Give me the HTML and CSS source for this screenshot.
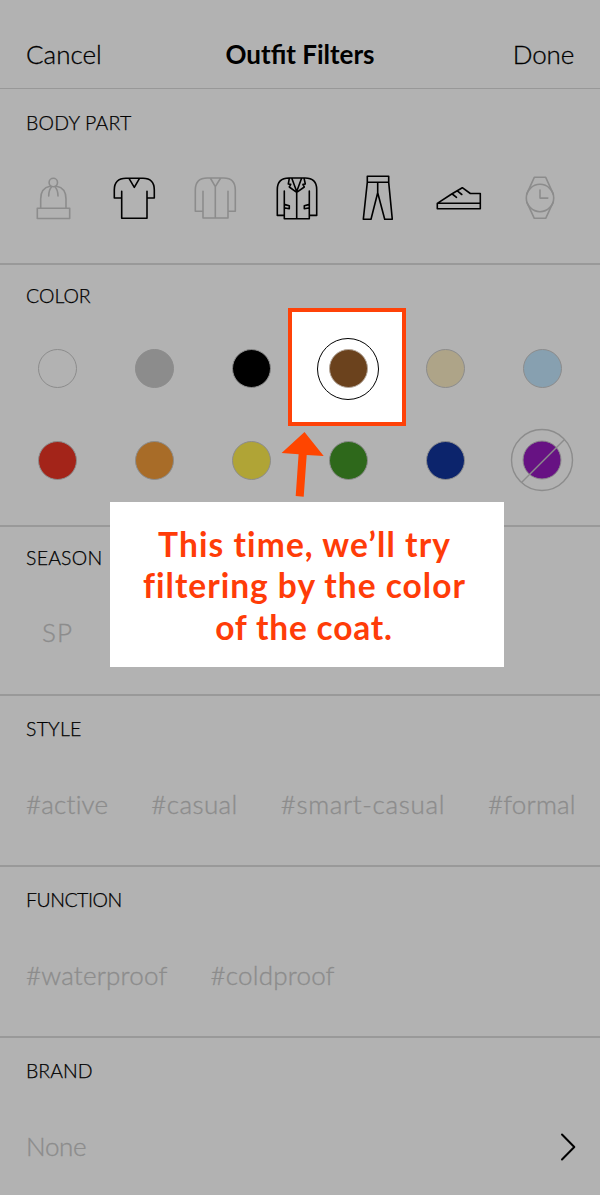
FILE: index.html
```html
<!DOCTYPE html>
<html lang="en">
<head>
<meta charset="utf-8">
<title>Outfit Filters</title>
<link rel="stylesheet" href="styles.css">
</head>
<body>
<main class="screen">
  <header class="navbar">
    <span class="nav-action cancel">Cancel</span>
    <h1 class="nav-title">Outfit Filters</h1>
    <span class="nav-action done">Done</span>
  </header>

  <section class="section body-part">
    <h2 class="heading h-body">BODY PART</h2>
    <div class="icons">
      <svg class="icon muted" viewBox="13 168 81 60"><circle cx="53.3" cy="182.5" r="4.2"/><path d="M40.7 208.3V199Q40.7 188 50 186.3M66 208.3V199Q66 188 56.6 186.3M51.6 186.7Q48.7 190 48.7 196M55 186.7Q58 190 58 196M37.3 208.3H69.7V218.5H37.3Z"/></svg>
      <svg class="icon" viewBox="94 168 81 60"><path d="M121.7 191.3V218.3H147V191.3M121.7 198H114.3V190Q114.3 178.3 126 178.3H143Q154.3 178.3 154.3 190V198H147M129 178.3L134.3 187.3L139.5 178.3"/></svg>
      <svg class="icon muted" viewBox="175 168 81 60"><path d="M203 191.3V218H228V191.3M203 211.3H195.3V190Q195.3 178 207.3 178H223.7Q235.3 178 235.3 190V211.3H228M210.3 178L215.3 186.7L220.7 178M215.3 186.7V218"/></svg>
      <svg class="icon" viewBox="256 168 81 60"><path d="M284.3 191V218.7H309.3V191M284.3 215.4H277.3V189.5Q277.3 178 289 178H305Q316.7 178 316.7 189.5V215.4H309.3M296.7 192V218.7M289.3 178.3L288.3 184L290.7 184.4L289.3 187L296.7 192.3L304.3 187L302.9 184.4L305.3 184L304.1 178.3M291.8 178.3L296.7 191.5L301.6 178.3M285 204.6L289.3 205.7V208.8L285 208M308.6 204.6L304.3 205.7V208.8L308.6 208"/></svg>
      <svg class="icon" viewBox="337 168 81 60"><path d="M367.3 176.3H388.7V182.3H367.3ZM367.3 182.3L363.3 219.3H371L377.7 192.7L384.7 219.3H392.3L388.7 182.3M377.7 182.3V192.7"/></svg>
      <svg class="icon" viewBox="418 168 81 60"><path d="M437.3 203.3L451.7 194L462.3 187.7L470.3 193.5H480.3V208.7H437.3ZM437.3 203.3H480.3M452.3 194L456.5 197.3M457.6 191.2L461.8 194.5"/></svg>
      <svg class="icon muted" viewBox="499 168 81 60"><circle cx="540" cy="198" r="13.7"/><path d="M526.7 194L534.3 177.3H545.7L553.3 194M526.7 202L534.3 218.3H545.7L553.3 202M540 190V198.1H547.8"/></svg>
    </div>
  </section>

  <section class="section color">
    <h2 class="heading h-color">COLOR</h2>
    <div class="swatches">
      <span class="cell"><i class="dot white"></i></span>
      <span class="cell"><i class="dot gray"></i></span>
      <span class="cell"><i class="dot black"></i></span>
      <span class="cell"></span>
      <span class="cell"><i class="dot beige"></i></span>
      <span class="cell"><i class="dot sky"></i></span>
      <span class="cell"><i class="dot red"></i></span>
      <span class="cell"><i class="dot orange"></i></span>
      <span class="cell"><i class="dot yellow"></i></span>
      <span class="cell"><i class="dot green"></i></span>
      <span class="cell"><i class="dot navy"></i></span>
      <span class="cell"><svg class="excluded" viewBox="0 0 64 64"><circle class="fill" cx="32" cy="32" r="19"/><circle cx="32" cy="32" r="30.5"/><path d="M11.5 54.5L54.5 11.5"/></svg></span>
    </div>
  </section>

  <section class="section season">
    <h2 class="heading h-season">SEASON</h2>
    <div class="tags"><span class="sp">SP</span></div>
  </section>

  <section class="section style">
    <h2 class="heading h-style">STYLE</h2>
    <div class="tags"><span class="t-active">#active</span><span class="t-casual">#casual</span><span class="t-smart">#smart-casual</span><span class="t-formal">#formal</span></div>
  </section>

  <section class="section function">
    <h2 class="heading h-function">FUNCTION</h2>
    <div class="tags"><span class="t-water">#waterproof</span><span class="t-cold">#coldproof</span></div>
  </section>

  <section class="section brand">
    <h2 class="heading h-brand">BRAND</h2>
    <div class="tags"><span class="t-none">None</span><svg class="chevron" viewBox="0 0 18 30"><path d="M3 2.5L15.3 15L3 27.5"/></svg></div>
  </section>

  <div class="highlight"><i class="ring"><i class="dot brown"></i></i></div>
  <svg class="arrow" viewBox="280 430 46 68"><path d="M304.5 432L323.7 456L306.7 455L303.7 496.7L295.7 496L298.6 454.3L281.6 453Z"/></svg>
  <div class="callout">
    <span class="line l1">This time, we’ll try</span>
    <span class="line l2">filtering by the color</span>
    <span class="line l3">of the coat.</span>
  </div>
</main>
</body>
</html>
```
FILE: styles.css
```css
* { box-sizing: border-box; }
body { margin: 0; background: #b2b2b2; color: #000; font-family: Lato, "Open Sans", sans-serif; font-weight: 300; }
.screen { position: relative; width: 600px; height: 1195px; overflow: hidden; }
.navbar { display: grid; grid-template-columns: 1fr auto 1fr; height: 89px; padding: 38px 26px 0; border-bottom: 1px solid #989898; line-height: 32px; }
.nav-action { font-size: 26px; -webkit-text-stroke: 0.3px currentColor; }
.nav-title { margin: 0; font-size: 26px; font-weight: 700; }
.done { text-align: right; letter-spacing: -0.2px; }
.section { border-bottom: 2px solid #999; padding-top: 22px; }
.heading { margin: 0 0 0 26px; font-size: 19.5px; line-height: 24px; font-weight: 300; white-space: nowrap; -webkit-text-stroke: 0.25px currentColor; }
.h-body { letter-spacing: 0.2px; }
.h-season { letter-spacing: 0.2px; }
.h-style { letter-spacing: 0.2px; }
.h-function { letter-spacing: -0.5px; }
.body-part { height: 176px; }
.color { height: 262px; padding-top: 19px; }
.season { height: 169px; padding-top: 19px; }
.style, .function { height: 171px; padding-top: 21px; }
.brand { border: 0; padding-top: 21px; }
.icons { display: flex; margin: 33px 0 0 13px; }
.icon { width: 81px; height: 60px; fill: none; stroke: #000; stroke-width: 1.6; stroke-linejoin: round; stroke-linecap: round; }
.icon.muted { stroke: #8c8c8c; }
.swatches { display: grid; grid-template-columns: repeat(6, 97px); grid-auto-rows: 91.5px; margin: 15px 0 0 8.6px; }
.cell { display: flex; align-items: center; justify-content: center; }
.dot { display: block; width: 39px; height: 39px; border: 1px solid #8c8c8c; border-radius: 50%; }
.gray { background: #8c8c8c; }
.black { background: #000; }
.beige { background: #aea488; }
.sky { background: #87a0b0; }
.red { background: #a32419; }
.orange { background: #a86c28; }
.yellow { background: #b0a436; }
.green { background: #2e681b; }
.navy { background: #0c246c; }
.brown { background: #6b421d; border-color: #b5a89c; }
.excluded { width: 64px; height: 64px; fill: none; stroke: #8c8c8c; stroke-width: 1.4; }
.excluded .fill { fill: #671283; stroke-width: 1; }
.tags { display: flex; gap: 43px; margin: 47px 25px 0 26px; font-size: 26px; line-height: 32px; color: #8c8c8c; white-space: nowrap; -webkit-text-stroke: 0.35px currentColor; }
.season .tags { margin-top: 46px; }
.sp { margin-left: 16px; letter-spacing: 1px; }
.t-active { letter-spacing: 0.2px; }
.t-casual { letter-spacing: 0.4px; }
.t-smart { letter-spacing: 0.65px; }
.t-formal { letter-spacing: 0.2px; }
.t-water { letter-spacing: 0.2px; }
.t-cold { letter-spacing: 0.2px; }
.t-none { letter-spacing: -0.3px; }
.chevron { width: 18px; height: 30px; margin: 2px -2px 0 auto; fill: none; stroke: #000; stroke-width: 2; stroke-linecap: round; stroke-linejoin: round; }
.highlight { position: absolute; left: 288px; top: 308px; width: 118px; height: 118px; display: flex; align-items: center; justify-content: center; background: #fff; border: 4px solid #ff4208; padding: 0 0 0 2px; }
.ring { display: flex; align-items: center; justify-content: center; width: 62px; height: 62px; margin-top: 3px; border: 1.5px solid #000; border-radius: 50%; }
.arrow { position: absolute; left: 280px; top: 430px; width: 46px; height: 68px; fill: #ff4500; }
.callout { position: absolute; left: 110px; top: 502px; width: 394px; height: 165px; padding-top: 21.5px; background: #fff; color: #ff3c08; text-align: center; font-size: 33.5px; line-height: 41.8px; font-weight: 700; white-space: nowrap; }
.line { display: block; letter-spacing: 1px; }
.l3 { letter-spacing: 0.8px; margin-right: 6px; }
.l1 { letter-spacing: 1.1px; margin-right: 5px; }
.l2 { margin-right: 5px; }
```
